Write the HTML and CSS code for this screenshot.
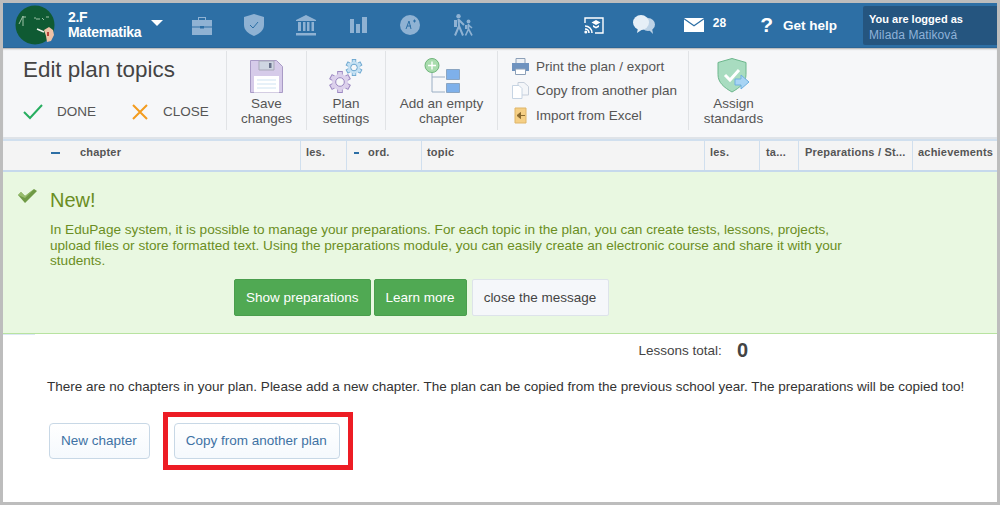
FILE: index.html
```html
<!DOCTYPE html>
<html lang="en">

<head>
    <meta charset="UTF-8" />
    <title>Edit plan topics</title>
    <link rel="stylesheet" href="styles.css">
</head>

<body>
    <div class="frame">

        <header class="topbar">
            <div class="avatar">
                <svg width="40" height="40" viewBox="0 0 40 40">
                    <circle cx="20" cy="20" r="19.5" fill="#0f5a33" />
                    <path d="M4 19l4-8v10M8 12h3M19 13h2M21 14h4M27 13l2 2M31 12h3" stroke="#9fc2a8" stroke-width="1" fill="none" />
                    <path d="M22 24l7 3" stroke="#eef2ea" stroke-width="1.5" />
                    <path d="M29 25l5-3 4 3 1 5-3 6-4 1-1-6z" fill="#eec1a6" />
                    <path d="M32 27l2 0 0 4-2 0z" fill="#b8443a" />
                </svg>
            </div>
            <div class="class-name">2.F<br>Matematika</div>
            <div class="caret"></div>

            <nav class="main-icons">
                <svg width="20" height="19" viewBox="0 0 20 19"><path d="M6 4V1h8v3h-1V2H7v2z" fill="#8fb2d3" /><path d="M0 4h20v6.500H12V10H8v.5H0zM0 11.500h8v1h4v-1h8V19H0z" fill="#8fb2d3" /></svg>
                <svg width="20" height="22" viewBox="0 0 20 22"><path d="M10 0l10 3v8c0 5-4 8.500-10 11C4 19.500 0 16 0 11V3z" fill="#8fb2d3" /><path d="M6 11l3 3 5-6" stroke="#2d6fa5" stroke-width="1" fill="none" /></svg>
                <svg width="22" height="21" viewBox="0 0 22 21"><path d="M11 0l10 5v1H1V5zM3 7h3v9H3zM8 7h2.500v9H8zM12 7h2.500v9H12zM16.500 7H19v9h-2.500zM1 18h20v2.500H1z" fill="#8fb2d3" /></svg>
                <svg width="17" height="16" viewBox="0 0 17 16"><path d="M0 2h4v14H0zM6 7h4v9H6zM12 0h5v16h-5z" fill="#8fb2d3" /></svg>
                <svg width="20" height="20" viewBox="0 0 20 20"><circle cx="10" cy="10" r="10" fill="#8fb2d3" /><path d="M6 14l3-8 2 8M7 11h4M13 6h3M14.500 4.500v3" stroke="#2d6fa5" stroke-width="1" fill="none" /></svg>
                <svg width="23" height="22" viewBox="0 0 23 22">
                    <g stroke="#8fb2d3" stroke-width="2" fill="none">
                        <path d="M7.500 5L8 12 4 21.500M8 12l4 9.500M8 6l5 5" />
                        <path d="M17.500 10v5l-3 6.500M17.500 15l3.500 6.500M17.500 11l3.500 3" stroke-width="1.600" />
                    </g>
                    <circle cx="7.500" cy="2.200" r="2.200" fill="#8fb2d3" />
                    <circle cx="17.500" cy="7.500" r="1.900" fill="#8fb2d3" />
                    <path d="M3 6h3v7H3zM14 11h2.500v4H14z" fill="#8fb2d3" />
                </svg>
            </nav>

            <div class="right-icons">
                <svg class="ic-cast" width="20" height="17" viewBox="0 0 20 17"><path d="M4 1h15v15h-8M1 6V1h3" stroke="#fff" stroke-width="1.400" fill="none" /><path d="M1 9a7 7 0 0 1 7 7M1 12a4 4 0 0 1 4 4" stroke="#fff" stroke-width="1.600" fill="none" /><circle cx="1.800" cy="15" r="1.500" fill="#fff" /><path d="M12 3l4.500 2.500L12 8 7.500 5.500zM9 8l3 1.700L15 8v2l-3 1.500L9 10z" fill="#fff" /></svg>
                <svg class="ic-chat" width="22" height="20" viewBox="0 0 22 20"><ellipse cx="15" cy="9.500" rx="7" ry="6.500" fill="#bcd2e6" /><path d="M15 14l5 5-1-6z" fill="#bcd2e6" /><ellipse cx="8" cy="7.500" rx="8" ry="7.500" fill="#e6eff7" /><path d="M5 13l-1 5 6-4z" fill="#e6eff7" /></svg>
                <svg class="ic-mail" width="20" height="14" viewBox="0 0 20 14"><path d="M0 0h20L10 7z" fill="#fff" /><path d="M0 1.500l10 7 10-7V14H0z" fill="#fff" /></svg>
                <span class="mail-count">28</span>
                <span class="help-mark">?</span>
                <span class="help-label">Get help</span>
            </div>

            <div class="user-box">
                <div class="logged">You are logged as</div>
                <div class="user-name">Milada Matiková</div>
            </div>
        </header>

        <section class="toolbar">
            <div class="tb-title">
                <h1>Edit plan topics</h1>
                <div class="title-actions">
                    <span class="action done">
                        <svg width="20" height="16" viewBox="0 0 20 16"><path d="M1 8l6 6L19 1" stroke="#27ae60" stroke-width="2" fill="none" /></svg>
                        DONE
                    </span>
                    <span class="action close">
                        <svg width="16" height="16" viewBox="0 0 16 16"><path d="M1 1l14 14M15 1L1 15" stroke="#f39c1f" stroke-width="2" fill="none" /></svg>
                        CLOSE
                    </span>
                </div>
            </div>

            <div class="tb-btn save">
                <svg width="33" height="33" viewBox="0 0 33 33"><path d="M.5.500h26l6 6v26H.5z" fill="#d6cbe9" stroke="#a99bc6" /><path d="M9 1h15v9H9z" fill="#cfd6e2" stroke="#a9a9b9" /><path d="M19 3h2.500v5H19z" fill="#67708a" /><path d="M4 16h25v16.500H4z" fill="#fff" /><path d="M7 20h19M7 24h19M7 28h19" stroke="#cfe3f2" /></svg>
                <span>Save<br>changes</span>
            </div>

            <div class="tb-btn settings">
                <svg width="34" height="34" viewBox="0 0 34 34">
                    <g transform="translate(11 23)">
                        <g fill="#9c88c2">
                            <rect x="-2.800" y="-11" width="5.600" height="22" />
                            <rect x="-2.800" y="-11" width="5.600" height="22" transform="rotate(60)" />
                            <rect x="-2.800" y="-11" width="5.600" height="22" transform="rotate(120)" />
                        </g>
                        <g fill="#dcd1ec">
                            <rect x="-1.900" y="-10" width="3.800" height="20" />
                            <rect x="-1.900" y="-10" width="3.800" height="20" transform="rotate(60)" />
                            <rect x="-1.900" y="-10" width="3.800" height="20" transform="rotate(120)" />
                            <circle r="8" />
                        </g>
                        <circle r="4.300" fill="#f6f7f9" stroke="#9c88c2" />
                    </g>
                    <g transform="translate(25 8.500)">
                        <g fill="#6ba6cf">
                            <rect x="-2.200" y="-8.500" width="4.400" height="17" />
                            <rect x="-2.200" y="-8.500" width="4.400" height="17" transform="rotate(60)" />
                            <rect x="-2.200" y="-8.500" width="4.400" height="17" transform="rotate(120)" />
                        </g>
                        <g fill="#c3e0f3">
                            <rect x="-1.400" y="-7.600" width="2.800" height="15.200" />
                            <rect x="-1.400" y="-7.600" width="2.800" height="15.200" transform="rotate(60)" />
                            <rect x="-1.400" y="-7.600" width="2.800" height="15.200" transform="rotate(120)" />
                            <circle r="6" />
                        </g>
                        <circle r="3.300" fill="#f6f7f9" stroke="#6ba6cf" />
                    </g>
                </svg>
                <span>Plan<br>settings</span>
            </div>

            <div class="tb-btn empty">
                <svg width="36" height="35" viewBox="0 0 36 35"><path d="M8 12v23h13M8 20h13" transform="translate(0 -1)" stroke="#9aaec4" stroke-width="1" fill="none" /><circle cx="8" cy="7.500" r="7" fill="#a9dcae" stroke="#6fb57b" /><path d="M8 3.500v8M4 7.500h8" stroke="#fff" stroke-width="1.400" /><path d="M22.500 11.500h13v10h-13zM22.500 25.500h13v9h-13z" fill="#7eb0ea" stroke="#8aa5c2" /></svg>
                <span>Add an empty<br>chapter</span>
            </div>

            <div class="tb-list">
                <div class="tb-row">
                    <svg width="17" height="17" viewBox="0 0 17 17"><path d="M4 .5h9v5H4z" fill="#eef1f5" stroke="#8da0b8" /><path d="M0 5h17v8h-3v-2H3v2H0z" fill="#6f93bf" /><path d="M3.500 11h10v5.500h-10z" fill="#fff" stroke="#8da0b8" /></svg>
                    Print the plan / export
                </div>
                <div class="tb-row">
                    <svg width="17" height="17" viewBox="0 0 17 17"><path d="M6 .5h6l4.500 4V13H6z" fill="#f4f6f9" stroke="#c6cfdb" /><path d="M.5 3.500H7l3 3v10H.5z" fill="#fff" stroke="#c6d4e3" /></svg>
                    Copy from another plan
                </div>
                <div class="tb-row">
                    <svg width="17" height="17" viewBox="0 0 17 17"><path d="M3 1h11v15H3z" fill="#f5cf85" stroke="#dfb568" /><path d="M5 8.500h8M5 8.500l3.500-3v6z" stroke="#8a6a30" fill="#8a6a30" /></svg>
                    Import from Excel
                </div>
            </div>

            <div class="tb-btn assign">
                <svg width="33" height="35" viewBox="0 0 33 35"><path d="M15 .5l14 4v12c0 8-6 13-14 17.500C7 29.500 1 24.500 1 16.500v-12z" fill="#a8dcc0" stroke="#6cb68c" /><path d="M8 17l5 5 9-10" stroke="#fff" stroke-width="3" fill="none" /><path d="M18 21h6v-4l8 7-8 7v-4h-6z" fill="#a8d4f4" stroke="#6fb0e0" /></svg>
                <span>Assign<br>standards</span>
            </div>
        </section>

        <div class="col-head">
            <div class="col c-chapter"><span class="dash wide"></span><b>chapter</b></div>
            <div class="col c-les">les.</div>
            <div class="col c-ord"><span class="dash"></span><b>ord.</b></div>
            <div class="col c-topic">topic</div>
            <div class="col c-les2">les.</div>
            <div class="col c-ta">ta...</div>
            <div class="col c-prep">Preparations / St...</div>
            <div class="col c-ach">achievements</div>
        </div>

        <section class="notice">
            <svg class="notice-check" width="19" height="14" viewBox="0 0 19 14"><path d="M0 6l3-3 4 4 9-7 3 2-12 12z" fill="#6f9a45" /><path d="M0 6l3-3 4 4 9-7-9 9z" fill="#97bd6c" /></svg>
            <div class="notice-body">
                <h2>New!</h2>
                <p>In EduPage system, it is possible to manage your preparations. For each topic in the plan, you can create tests, lessons, projects, upload files or store formatted text. Using the preparations module, you can easily create an electronic course and share it with your students.</p>
                <div class="notice-btns">
                    <a class="btn-green">Show preparations</a>
                    <a class="btn-green">Learn more</a>
                    <a class="btn-close">close the message</a>
                </div>
            </div>
        </section>

        <div class="tick"></div>

        <main class="content">
            <div class="total">
                <span>Lessons total:</span>
                <b>0</b>
            </div>
            <p class="empty-msg">There are no chapters in your plan. Please add a new chapter. The plan can be copied from the previous school year. The preparations will be copied too!</p>
            <div class="content-btns">
                <a class="btn-light">New chapter</a>
                <div class="highlight">
                    <a class="btn-light">Copy from another plan</a>
                </div>
            </div>
        </main>

    </div>
</body>

</html>
```

FILE: styles.css
```css
* {
    box-sizing: border-box;
}

html,
body {
    margin: 0;
    height: 505px;
    overflow: hidden;
}

body {
    font-family: "Liberation Sans", Arial, sans-serif;
    background: #bdbdbd;
    color: #444;
}

.frame {
    margin: 3px;
    height: 499px;
    background: #fff;
    overflow: hidden;
}

/* top blue bar */
.topbar {
    height: 45px;
    background: #2d6fa5;
    display: flex;
    align-items: center;
    color: #fff;
    border-bottom: 1px solid #2a6698;
}

.avatar {
    width: 40px;
    height: 40px;
    margin-left: 12px;
    flex: none;
}

.class-name {
    margin-left: 13px;
    width: 83px;
    font-size: 14px;
    line-height: 15px;
    font-weight: bold;
    letter-spacing: -0.3px;
    flex: none;
}

.caret {
    width: 0;
    height: 0;
    border-left: 6px solid transparent;
    border-right: 6px solid transparent;
    border-top: 6px solid #fff;
    margin-top: -4px;
    flex: none;
}

.main-icons {
    margin-left: 13px;
    display: grid;
    grid-template-columns: repeat(6, 52px);
    justify-items: center;
    align-items: center;
    flex: none;
}

.right-icons {
    display: flex;
    align-items: center;
    margin-left: auto;
    flex: none;
}

.ic-cast {
    margin-right: 29px;
}

.ic-chat {
    margin-right: 29px;
}

.mail-count {
    font-size: 12px;
    font-weight: bold;
    margin: -5px 0 0 9px;
}

.help-mark {
    font-size: 21px;
    font-weight: bold;
    margin-left: 34px;
}

.help-label {
    font-size: 13.500px;
    font-weight: bold;
    margin-left: 10px;
}

.user-box {
    margin-left: 26px;
    width: 134px;
    height: 39px;
    background: #25557f;
    border-radius: 2px 0 0 2px;
    padding: 6px 6px;
    font-size: 11px;
    line-height: 15px;
    flex: none;
}

.logged {
    font-weight: bold;
}

.user-name {
    color: #8fb2d9;
    font-size: 12px;
    letter-spacing: 0.1px;
    margin-top: 1px;
}

/* toolbar under the blue bar */
.toolbar {
    height: 91px;
    background: #f6f7f9;
    display: flex;
    border-bottom: 2px solid #dfe3e8;
    box-shadow: inset 0 2px 2px -1px #aaa;
    padding-top: 3px;
    color: #555;
    font-size: 13.500px;
}

.tb-title {
    width: 224px;
    height: 79px;
    padding: 0 0 0 20px;
    border-right: 1px solid #e1e3e6;
    flex: none;
}

.tb-title h1 {
    margin: 4px 0 0;
    font-size: 22.400px;
    line-height: 30px;
    font-weight: normal;
    color: #444;
}

.title-actions {
    display: flex;
    margin-top: 18px;
    line-height: 18px;
}

.action {
    display: flex;
    align-items: center;
    flex: none;
}

.action.done {
    width: 109px;
    gap: 14px;
}

.action.close {
    gap: 15px;
}

.tb-btn {
    height: 79px;
    display: flex;
    flex-direction: column;
    align-items: center;
    justify-content: flex-end;
    border-right: 1px solid #e1e3e6;
    line-height: 15px;
    text-align: center;
    flex: none;
    padding-bottom: 4px;
}

.tb-btn svg {
    margin-bottom: 3px;
}

.save {
    width: 80px;
}

.settings {
    width: 79px;
}

.empty {
    width: 112px;
}

.assign {
    width: 89px;
    border-right: none;
}

.tb-list {
    width: 191px;
    height: 79px;
    border-right: 1px solid #e1e3e6;
    padding: 3px 0 0 14px;
    flex: none;
}

.tb-row {
    height: 24.500px;
    display: flex;
    align-items: center;
    gap: 7px;
}

/* table head */
.col-head {
    height: 33px;
    background: #f4f4f4;
    display: flex;
    border-top: 2px solid #d0dfee;
    border-bottom: 2px solid #c6d9ec;
    font-size: 11px;
    font-weight: bold;
    letter-spacing: 0.2px;
    color: #555;
}

.col {
    padding: 5px 0 0 6px;
    border-right: 1px solid #d0dfee;
    flex: none;
    white-space: nowrap;
}

.dash {
    display: inline-block;
    width: 5px;
    height: 2px;
    background: #2d6fa5;
    vertical-align: middle;
    margin: 0 9px 0 0;
}

.dash.wide {
    width: 9px;
    margin-right: 20px;
}

.c-chapter {
    width: 298px;
    padding-left: 48px;
}

.c-les {
    width: 46px;
    padding-left: 5px;
}

.c-ord {
    width: 75px;
    padding-left: 7px;
}

.c-topic {
    width: 283px;
    padding-left: 5px;
}

.c-les2 {
    width: 55px;
    padding-left: 5px;
}

.c-ta {
    width: 39px;
    padding-left: 6px;
}

.c-prep {
    width: 114px;
}

.c-ach {
    border-right: none;
    padding-left: 5px;
}

/* green message */
.notice {
    height: 162px;
    background: #e9f8e1;
    border-bottom: 1px solid #b8e3a0;
    display: flex;
    padding: 16px 0 0 15px;
    color: #6b8e23;
}

.notice-check {
    flex: none;
    margin-top: 1px;
}

.notice-body {
    margin-left: 13px;
    width: 800px;
}

.notice-body h2 {
    margin: 0;
    font-size: 20px;
    line-height: 24px;
    font-weight: normal;
}

.notice-body p {
    margin: 10px 0 0;
    font-size: 13.600px;
    line-height: 15.500px;
    width: 800px;
}

.notice-btns {
    display: flex;
    margin: 10px 0 0 184px;
    font-size: 13.500px;
}

.btn-green {
    height: 37px;
    line-height: 35px;
    padding: 0 11px;
    margin-right: 3px;
    background: #50a953;
    border: 1px solid #4a9e4d;
    border-radius: 2px;
    color: #fff;
}

.btn-close {
    height: 37px;
    line-height: 35px;
    padding: 0 12px 0 11px;
    margin-left: 2px;
    background: #f5f7fa;
    border: 1px solid #dde3ea;
    border-radius: 2px;
    color: #444;
}

.tick {
    width: 32px;
    height: 1px;
    background: #dce8f4;
}

/* white part with the message and buttons */
.content {
    padding: 4px 0 0 44px;
    font-size: 13.500px;
    color: #333;
}

.total {
    display: flex;
    align-items: center;
    justify-content: flex-end;
    gap: 15px;
    padding-right: 249px;
    height: 22px;
    color: #444;
}

.total b {
    font-size: 20px;
}

.empty-msg {
    margin: 18px 0 0;
    line-height: 16px;
    white-space: nowrap;
}

.content-btns {
    display: flex;
    align-items: center;
    gap: 13px;
    margin-top: 17px;
    margin-left: 2px;
}

.highlight {
    padding: 6px 8px 6px 6px;
    border: 5px solid #ed1c24;
}

.btn-light {
    display: block;
    height: 36px;
    line-height: 34px;
    padding: 0 12px 0 11px;
    border: 1px solid #c8d8e6;
    border-radius: 4px;
    background: linear-gradient(#fff, #f5f9fd);
    color: #3e72a4;
}
```
